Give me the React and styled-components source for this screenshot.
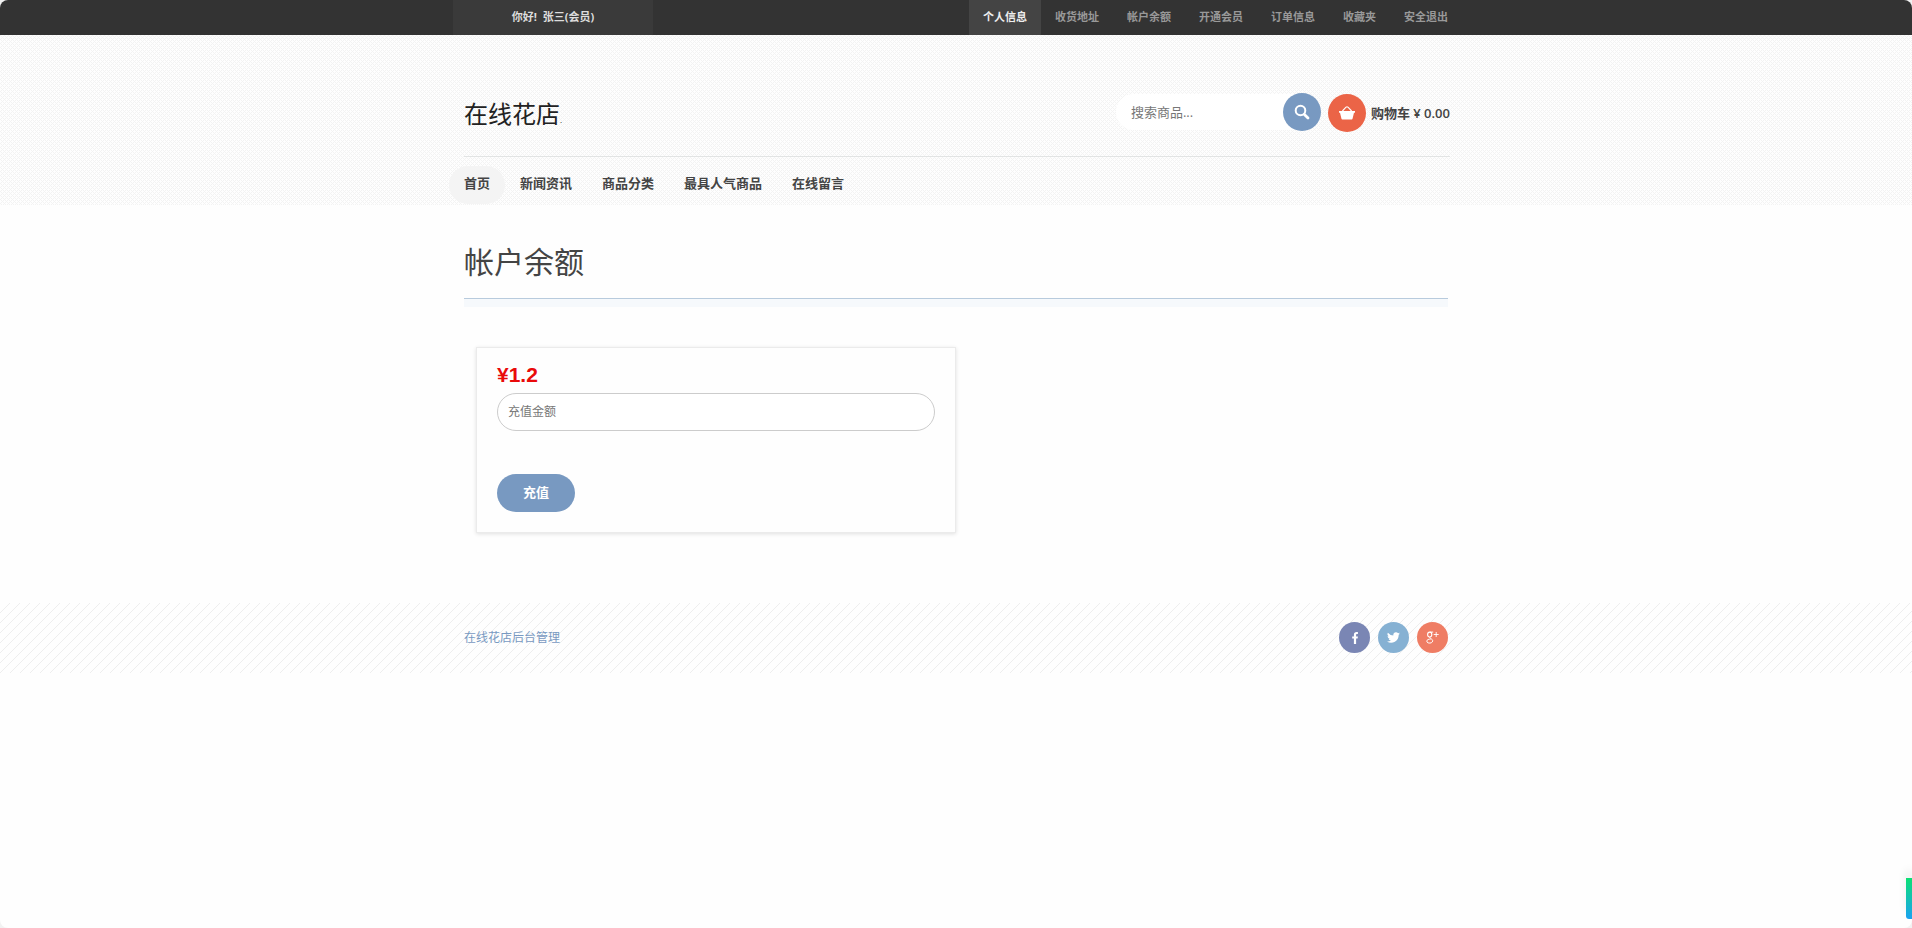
import React from "react";
import styled, { createGlobalStyle } from "styled-components";

const GlobalStyle = createGlobalStyle`
  *, *::before, *::after { box-sizing: border-box; }
  html { background: #f2f2f2; }
  body {
    margin: 0;
    color: #444;
    font: 13px/20px "Open Sans", "Noto Sans CJK SC", sans-serif;
  }
  a { color: inherit; text-decoration: none; }
  ul { list-style: none; margin: 0; padding: 0; }
  h1, h2, p { margin: 0; font-weight: 400; }
  button, input { font: inherit; }
`;

const Page = styled.div`
  min-height: 100vh;
  background: #fefefe;
  border-radius: 8px;
  overflow: hidden;
`;

const TopBar = styled.div`
  background: #333;
`;

const TopInner = styled.div`
  display: flex;
  justify-content: space-between;
  max-width: 1012px;
  height: 35px;
  margin: 0 auto;
  padding-left: 3px;
  font-size: 11px;
  font-weight: 700;
  line-height: 34px;
`;

const Greeting = styled.p`
  width: 200px;
  background: #3a3a3a;
  color: #ddd;
  font-weight: 700;
  text-align: center;
  white-space: pre;
`;

const TopLinks = styled.ul`
  display: flex;
`;

const TopLink = styled.a`
  display: block;
  height: 35px;
  padding: 0 14px;
  background: ${(p) => (p.$active ? "#444" : "transparent")};
  color: ${(p) => (p.$active ? "#eee" : "#999")};
`;

const Header = styled.header`
  background: #fefefe url("data:image/svg+xml,%3Csvg xmlns='http://www.w3.org/2000/svg' width='4' height='4' shape-rendering='crispEdges'%3E%3Cpath d='M0 0h1v1h-1zM1 1h1v1h-1zM2 2h1v1h-1zM3 3h1v1h-1zM3 1h1v1h-1zM1 3h1v1h-1z' fill='%23f3f3f3'/%3E%3C/svg%3E");
`;

const Container = styled.div`
  max-width: 984px;
  margin: 0 auto;
`;

const Brand = styled.div`
  display: flex;
  justify-content: space-between;
  align-items: flex-end;
  height: 122px;
  margin-right: -2px;
  padding-bottom: 24px;
  border-bottom: 1px solid #e2e4e4;
`;

const Logo = styled.a`
  color: #222;
  font-size: 24px;
  line-height: 24px;

  small { font-size: 8px; }
`;

const Tools = styled.div`
  display: flex;
  align-items: flex-start;
`;

const Search = styled.form`
  display: flex;
  align-items: center;
  width: 205px;
  height: 36px;
  border-radius: 18px;
  background: #fff;
`;

const SearchInput = styled.input`
  flex: 1;
  min-width: 0;
  height: 36px;
  padding: 0 15px;
  border: 0;
  outline: 0;
  background: transparent;
  color: #777;

  &::placeholder { color: #777; opacity: 1; }
`;

const Round = styled.span`
  display: flex;
  flex: none;
  align-items: center;
  justify-content: center;
  width: ${(p) => p.$size || 38}px;
  height: ${(p) => p.$size || 38}px;
  padding: 0;
  border: 0;
  border-radius: 50%;
  background: ${(p) => p.$bg};
  color: #fff;
`;

const Cart = styled.a`
  display: flex;
  align-items: center;
  gap: 5px;
  margin-left: 7px;
  font-weight: 600;
  white-space: nowrap;
`;

const Nav = styled.ul`
  display: flex;
  height: 48px;
  margin-left: -15px;
  padding-top: 9px;
`;

const NavLink = styled.a`
  display: block;
  height: 38px;
  padding: 0 15px;
  border-radius: 19px;
  background: ${(p) => (p.$active ? "#f4f4f4" : "transparent")};
  font-weight: 700;
  line-height: 34px;
`;

const Title = styled.h1`
  padding: 36px 0 16px;
  border-bottom: 1px solid #b8cbdd;
  box-shadow: 0 8px 0 #f6f9fc;
  font-size: 30px;
  line-height: 41px;
`;

const Card = styled.form`
  width: 480px;
  max-width: calc(100% - 24px);
  margin: 48px 12px 70px;
  padding: 12px 20px 20px;
  border: 1px solid #ebebeb;
  box-shadow: 0 1px 4px rgba(0, 0, 0, 0.12);
`;

const Balance = styled.p`
  color: #e90a0a;
  font: 700 21px/30px "Liberation Sans", sans-serif;
`;

const Amount = styled.input`
  display: block;
  width: 100%;
  height: 38px;
  margin: 3px 0 43px;
  padding: 0 10px 2px;
  border: 1px solid #ccc;
  border-radius: 19px;
  background: #fff;
  color: #777;
  font-size: 12px;

  &::placeholder { color: #777; opacity: 1; }
`;

const Submit = styled.button`
  display: block;
  width: 78px;
  height: 38px;
  padding: 0 0 2px;
  border: 0;
  border-radius: 19px;
  background: #7899c1;
  color: #fff;
  font-weight: 700;
`;

const Footer = styled.footer`
  background: url("data:image/svg+xml,%3Csvg xmlns='http://www.w3.org/2000/svg' width='10' height='10'%3E%3Cpath d='M-1 11L11 -1M-1 1L1 -1M9 11L11 9' stroke='%23eeeeee' fill='none'/%3E%3C/svg%3E");
`;

const FooterInner = styled(Container)`
  display: flex;
  justify-content: space-between;
  align-items: center;
  height: 70px;
  padding-bottom: 1px;
  color: #7899c1;
  font-size: 12px;
`;

const Social = styled.ul`
  display: flex;
  gap: 8px;
`;

const SideTab = styled.div`
  position: fixed;
  right: 0;
  bottom: 9px;
  width: 6px;
  height: 41px;
  border-radius: 0 0 0 3px;
  background: linear-gradient(#0be074, #1aa2f2);
  box-shadow: 0 -8px 8px rgba(0, 0, 0, 0.08);
`;

const topLinks = ["个人信息", "收货地址", "帐户余额", "开通会员", "订单信息", "收藏夹", "安全退出"];
const navLinks = ["首页", "新闻资讯", "商品分类", "最具人气商品", "在线留言"];

const SearchIcon = () => (
  <svg width="16" height="16" viewBox="0 0 16 16" fill="none" stroke="#fff" aria-hidden="true">
    <circle cx="6.5" cy="6.5" r="4.8" strokeWidth="2" />
    <path d="M10.4 10.4L14 14" strokeWidth="2.8" strokeLinecap="round" />
  </svg>
);

const BasketIcon = () => (
  <svg width="16" height="16" viewBox="0 0 16 16" aria-hidden="true">
    <path d="M3.4 6L7 2.2Q8 1.4 9 2.2L12.6 6" fill="none" stroke="#fff" strokeWidth="1.1" />
    <path d="M0 6H16V7.8H15L13.6 13.5Q13.4 14.4 12.6 14.4H3.4Q2.6 14.4 2.4 13.5L1 7.8H0Z" fill="#fff" />
  </svg>
);

const FacebookIcon = () => (
  <svg width="12" height="12" viewBox="0 0 12 12" fill="#fff" aria-hidden="true">
    <path d="M4.9 12V6.5H3.2V4.4H4.9V2.8C4.9 1 5.9 0 7.6 0H8.9V2.1H8C7.3 2.1 7.1 2.4 7.1 3V4.4H8.9L8.6 6.5H7.1V12Z" />
  </svg>
);

const TwitterIcon = () => (
  <svg width="13" height="13" viewBox="0 0 24 24" fill="#fff" aria-hidden="true">
    <path d="M24 4.6a10 10 0 0 1-2.8.8 5 5 0 0 0 2.1-2.7 10 10 0 0 1-3.1 1.2 4.9 4.9 0 0 0-8.4 4.5A14 14 0 0 1 1.7 3.1a4.9 4.9 0 0 0 1.5 6.6 5 5 0 0 1-2.2-.6 4.9 4.9 0 0 0 3.9 4.9 5 5 0 0 1-2.2.1 4.9 4.9 0 0 0 4.6 3.4A9.9 9.9 0 0 1 0 19.5a14 14 0 0 0 21.5-12.4A10 10 0 0 0 24 4.6z" />
  </svg>
);

const GoogleIcon = () => (
  <svg width="13" height="13" viewBox="0 0 13 13" fill="none" stroke="#fff" aria-hidden="true">
    <ellipse cx="3.7" cy="3.6" rx="2.1" ry="2.5" strokeWidth="1.1" />
    <path d="M3.7 1.1H7.2M4.2 6.2C2.6 7.4 6.7 7.6 6.7 9.8C6.7 12.8 0.8 12.8 0.8 10.2C0.8 8.6 2.8 8 4.7 8.1" strokeWidth="1" />
    <path d="M10.2 1V6M7.7 3.5H12.7" strokeWidth="0.9" />
  </svg>
);

const socials = [
  { name: "Facebook", bg: "#7a86b4", Icon: FacebookIcon },
  { name: "Twitter", bg: "#86b1d3", Icon: TwitterIcon },
  { name: "Google+", bg: "#ef7d64", Icon: GoogleIcon },
];

export default function App() {
  return (
    <Page>
      <GlobalStyle />
      <TopBar>
        <TopInner>
          <Greeting>{"你好!  张三(会员)"}</Greeting>
          <TopLinks>
            {topLinks.map((t, i) => (
              <li key={t}><TopLink href="#" $active={i === 0}>{t}</TopLink></li>
            ))}
          </TopLinks>
        </TopInner>
      </TopBar>
      <Header>
        <Container>
          <Brand>
            <Logo href="#">在线花店<small>.</small></Logo>
            <Tools>
              <Search onSubmit={(e) => e.preventDefault()}>
                <SearchInput aria-label="搜索商品" placeholder="搜索商品..." />
                <Round as="button" type="submit" aria-label="搜索" $bg="#7899c1"><SearchIcon /></Round>
              </Search>
              <Cart href="#">
                <Round $bg="#eb6447"><BasketIcon /></Round>
                购物车 ¥ 0.00
              </Cart>
            </Tools>
          </Brand>
          <nav>
            <Nav>
              {navLinks.map((t, i) => (
                <li key={t}><NavLink href="#" $active={i === 0}>{t}</NavLink></li>
              ))}
            </Nav>
          </nav>
        </Container>
      </Header>
      <Container as="main">
        <Title>帐户余额</Title>
        <Card onSubmit={(e) => e.preventDefault()}>
          <Balance>¥1.2</Balance>
          <Amount aria-label="充值金额" placeholder="充值金额" />
          <Submit type="submit">充值</Submit>
        </Card>
      </Container>
      <Footer>
        <FooterInner>
          <a href="#">在线花店后台管理</a>
          <Social>
            {socials.map(({ name, bg, Icon }) => (
              <li key={name}>
                <Round as="a" href="#" aria-label={name} $bg={bg} $size={31}><Icon /></Round>
              </li>
            ))}
          </Social>
        </FooterInner>
      </Footer>
      <SideTab />
    </Page>
  );
}
